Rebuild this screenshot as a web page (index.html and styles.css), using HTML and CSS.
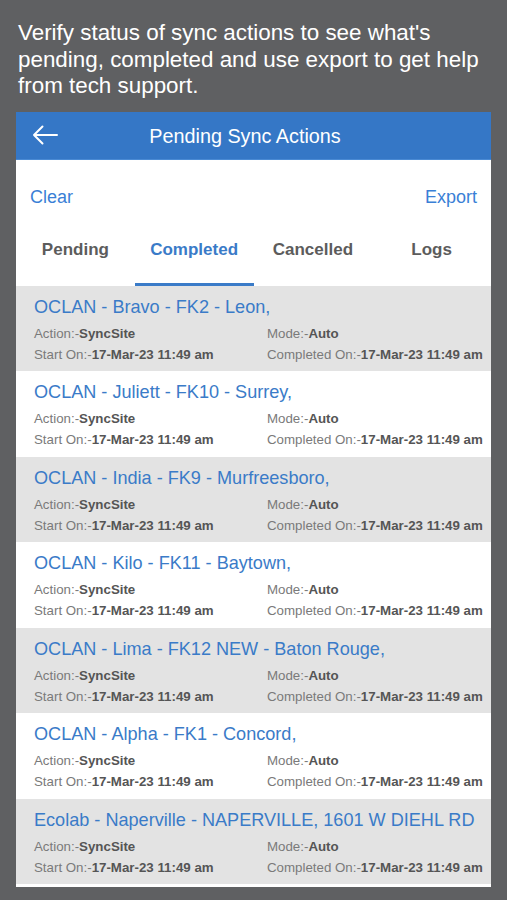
FILE: index.html
```html
<!DOCTYPE html>
<html lang="en">
<head>
    <meta charset="UTF-8">
    <meta name="viewport" content="width=device-width, initial-scale=1.0">
    <title>Pending Sync Actions</title>
    <link rel="stylesheet" href="styles.css">
</head>
<body>
    <p class="intro">Verify status of sync actions to see what's pending, completed and use export to get help from tech support.</p>

    <div class="phone">
        <div class="topbar">
            <svg class="back" width="26" height="20" viewBox="0 0 26 20">
                <path d="M25 10H2M10.5 1.5L2 10l8.5 8.5" fill="none" stroke="#fff" stroke-width="2" stroke-linecap="round" stroke-linejoin="round"/>
            </svg>
            <span class="title">Pending Sync Actions</span>
        </div>

        <div class="actions">
            <a class="link">Clear</a>
            <a class="link">Export</a>
        </div>

        <div class="tabs">
            <div class="tab">Pending</div>
            <div class="tab active">Completed</div>
            <div class="tab">Cancelled</div>
            <div class="tab">Logs</div>
        </div>

        <div class="list">
            <div class="row odd">
                <div class="site">OCLAN - Bravo - FK2 - Leon,</div>
                <div class="meta">
                    <span>Action:-<b>SyncSite</b></span><span>Mode:-<b>Auto</b></span>
                    <span>Start On:-<b>17-Mar-23 11:49 am</b></span><span>Completed On:-<b>17-Mar-23 11:49 am</b></span>
                </div>
            </div>
            <div class="row">
                <div class="site">OCLAN - Juliett - FK10 - Surrey,</div>
                <div class="meta">
                    <span>Action:-<b>SyncSite</b></span><span>Mode:-<b>Auto</b></span>
                    <span>Start On:-<b>17-Mar-23 11:49 am</b></span><span>Completed On:-<b>17-Mar-23 11:49 am</b></span>
                </div>
            </div>
            <div class="row odd">
                <div class="site">OCLAN - India - FK9 - Murfreesboro,</div>
                <div class="meta">
                    <span>Action:-<b>SyncSite</b></span><span>Mode:-<b>Auto</b></span>
                    <span>Start On:-<b>17-Mar-23 11:49 am</b></span><span>Completed On:-<b>17-Mar-23 11:49 am</b></span>
                </div>
            </div>
            <div class="row">
                <div class="site">OCLAN - Kilo - FK11 - Baytown,</div>
                <div class="meta">
                    <span>Action:-<b>SyncSite</b></span><span>Mode:-<b>Auto</b></span>
                    <span>Start On:-<b>17-Mar-23 11:49 am</b></span><span>Completed On:-<b>17-Mar-23 11:49 am</b></span>
                </div>
            </div>
            <div class="row odd">
                <div class="site">OCLAN - Lima - FK12 NEW - Baton Rouge,</div>
                <div class="meta">
                    <span>Action:-<b>SyncSite</b></span><span>Mode:-<b>Auto</b></span>
                    <span>Start On:-<b>17-Mar-23 11:49 am</b></span><span>Completed On:-<b>17-Mar-23 11:49 am</b></span>
                </div>
            </div>
            <div class="row">
                <div class="site">OCLAN - Alpha - FK1 - Concord,</div>
                <div class="meta">
                    <span>Action:-<b>SyncSite</b></span><span>Mode:-<b>Auto</b></span>
                    <span>Start On:-<b>17-Mar-23 11:49 am</b></span><span>Completed On:-<b>17-Mar-23 11:49 am</b></span>
                </div>
            </div>
            <div class="row odd">
                <div class="site">Ecolab - Naperville - NAPERVILLE, 1601 W DIEHL RD</div>
                <div class="meta">
                    <span>Action:-<b>SyncSite</b></span><span>Mode:-<b>Auto</b></span>
                    <span>Start On:-<b>17-Mar-23 11:49 am</b></span><span>Completed On:-<b>17-Mar-23 11:49 am</b></span>
                </div>
            </div>
        </div>
    </div>
</body>
</html>
```

FILE: styles.css
```css
body {
    margin: 0;
    background-color: #5f6062;
    font-family: "Liberation Sans", Arial, sans-serif;
}
.intro {
    margin: 0;
    padding: 20px 14px 12px 18px;
    color: #fff;
    font-size: 22.4px;
    line-height: 26.5px;
}
.phone {
    margin: 0 16px;
    background: #fff;
    padding-bottom: 3px;
}
.topbar {
    height: 47px;
    background-color: #3577c6;
    border-bottom: 1px solid #4a8ad4;
    display: flex;
    align-items: center;
    position: relative;
}
.back {
    margin-left: 16px;
}
.title {
    position: absolute;
    left: 0;
    right: 17px;
    top: 13px;
    text-align: center;
    color: #fff;
    font-size: 19.8px;
}
.actions {
    display: flex;
    justify-content: space-between;
    padding: 26px 14px 14px;
}
.link {
    color: #3a7fd6;
    font-size: 18px;
    line-height: 22px;
}
.tabs {
    display: grid;
    grid-template-columns: repeat(4, 1fr);
}
.tab {
    text-align: center;
    font-size: 17px;
    font-weight: bold;
    color: #5c5c5c;
    line-height: 20px;
    padding: 18px 0 23px;
    border-bottom: 3px solid transparent;
}
.tab.active {
    color: #3a7bc8;
    border-bottom-color: #3a7bc8;
}
.row {
    height: 85.5px;
    box-sizing: border-box;
    padding: 10px 4px 0 18px;
    background: #fff;
}
.row.odd {
    background: #e3e3e3;
}
.site {
    color: #3a7bc8;
    font-size: 18.1px;
    line-height: 22px;
    margin-bottom: 5px;
    white-space: nowrap;
}
.meta {
    display: grid;
    grid-template-columns: 233px 1fr;
    font-size: 13.3px;
    line-height: 21px;
    color: #7a7a7a;
    white-space: nowrap;
}
.meta b {
    color: #555;
}
```
